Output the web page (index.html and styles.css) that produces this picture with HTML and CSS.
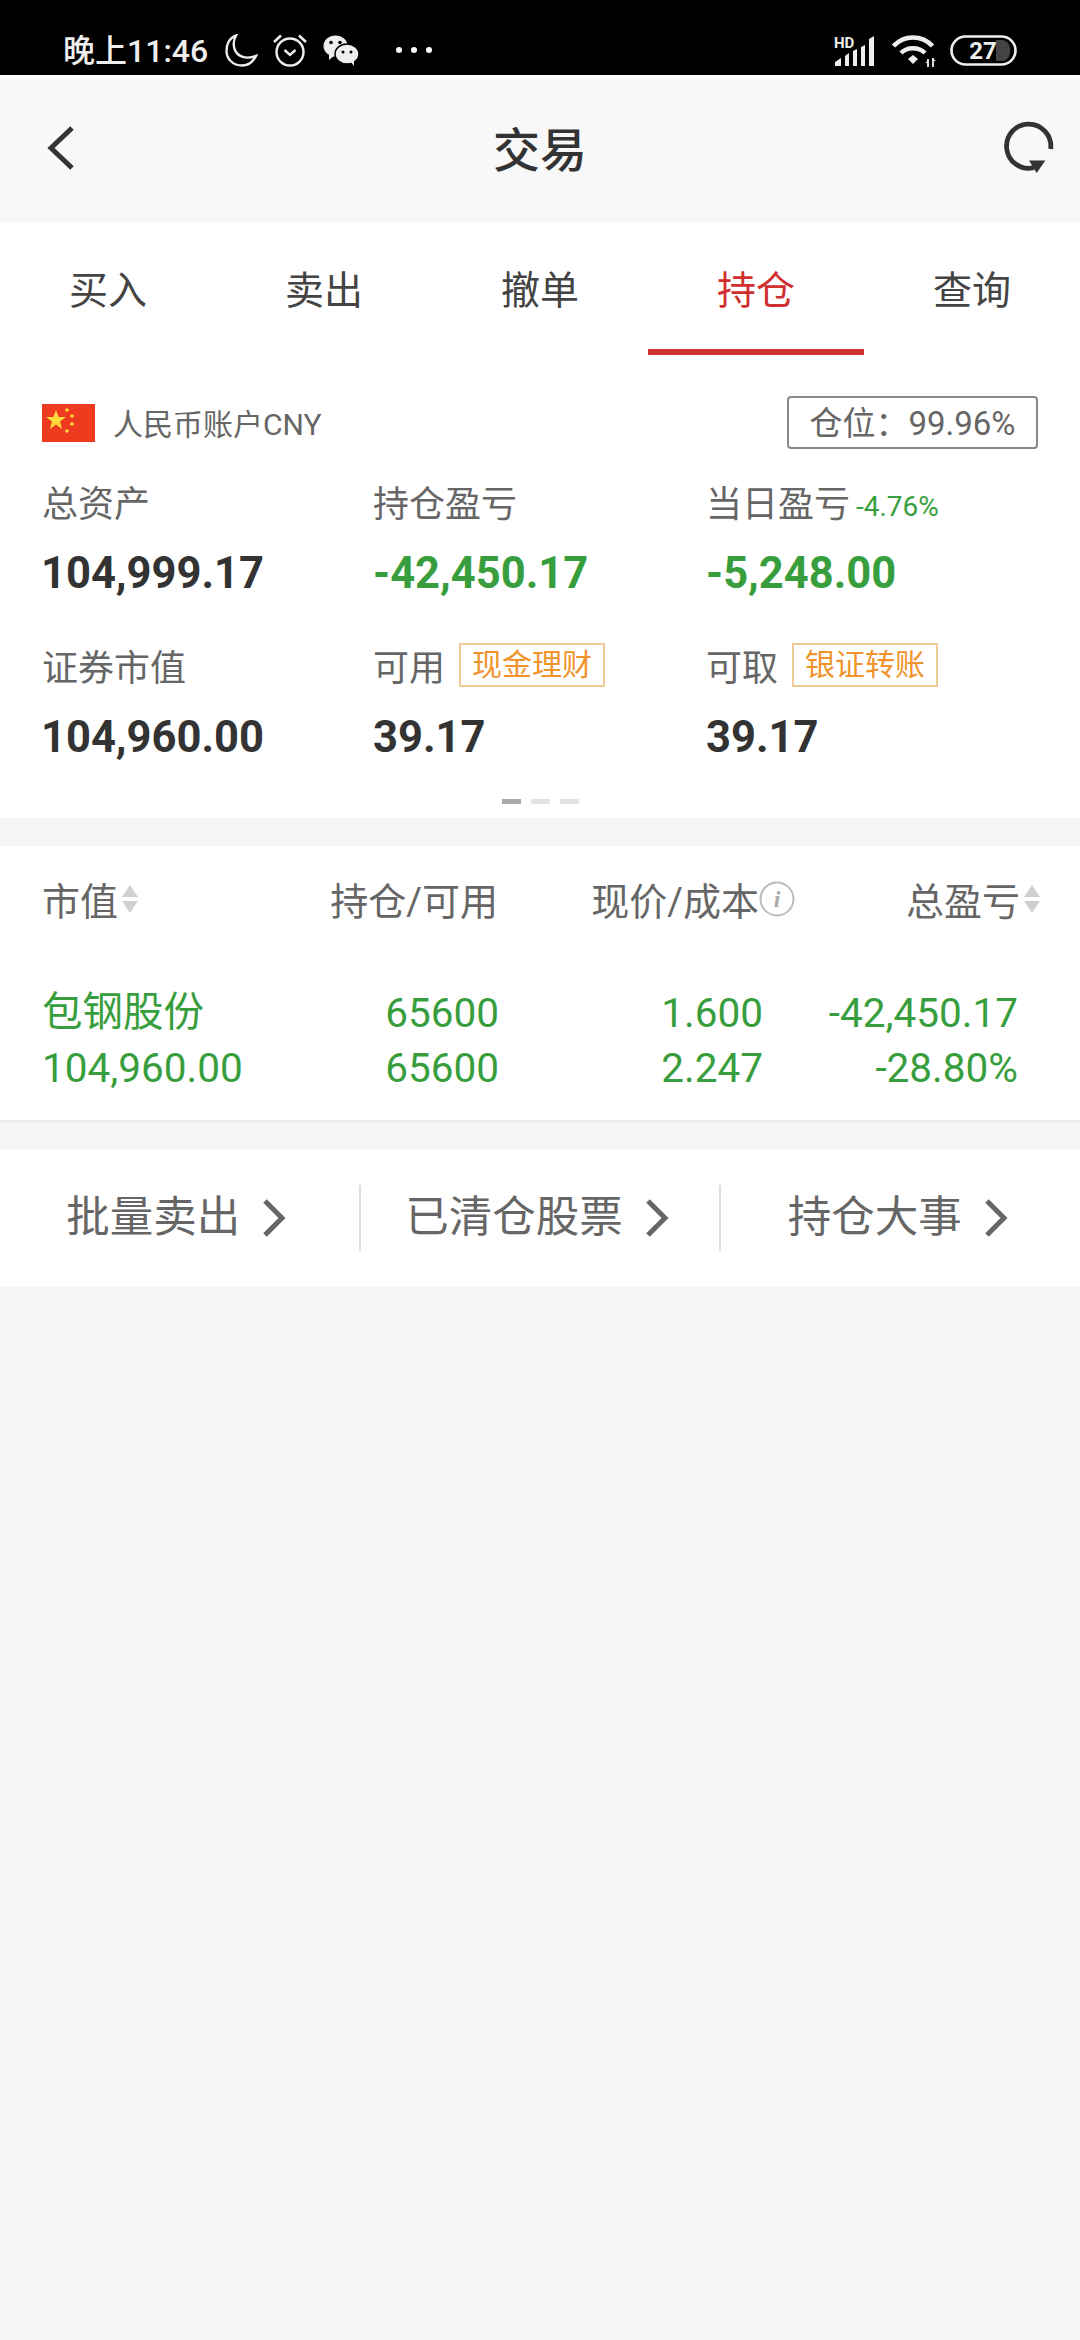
FILE: index.html
```html
<!DOCTYPE html>
<html lang="zh-CN">
<head>
  <meta charset="UTF-8">
  <title>交易</title>
  <link rel="stylesheet" href="styles.css">
</head>
<body>
  <!-- status bar -->
  <div class="status">
    <span class="status-time">晚上11:46</span>
    <svg class="ic-moon" width="33" height="33" viewBox="0 0 33 33"><path d="M11 1.5C4 4 1.5 11 1.5 17C1.5 25 8 31.5 17 31.5C23 31.5 28 28 31 22C20 26 12 22 9.500 15C8 10 9 5 11 1.500Z" fill="none" stroke="#eee" stroke-width="2.400"/></svg>
    <svg class="ic-alarm" width="34" height="35" viewBox="0 0 34 35"><circle cx="17" cy="19" r="13.500" fill="none" stroke="#eee" stroke-width="2.400"/><path d="M1 9L8 2.500M33 9L26 2.500" stroke="#eee" stroke-width="2.600"/><path d="M11.500 17L17 22L22.500 17" fill="none" stroke="#eee" stroke-width="2.400"/></svg>
    <svg class="ic-wechat" width="36" height="31" viewBox="0 0 36 31">
      <ellipse cx="12.500" cy="11" rx="12" ry="10.500" fill="#eee"/>
      <path d="M6 18L6 25L12 20Z" fill="#eee"/>
      <ellipse cx="24" cy="19" rx="12" ry="10" fill="#eee" stroke="#000" stroke-width="1.500"/>
      <path d="M28 27L31 31L31 25Z" fill="#eee"/>
      <circle cx="8" cy="7.500" r="1.800" fill="#000"/><circle cx="17" cy="7.500" r="1.800" fill="#000"/>
      <circle cx="20" cy="17" r="1.500" fill="#000"/><circle cx="28" cy="17" r="1.500" fill="#000"/>
    </svg>
    <div class="status-dots"><i></i><i></i><i></i></div>
    <svg class="ic-signal" width="42" height="32" viewBox="0 0 42 32">
      <text x="0" y="13" class="hd-text">HD</text>
      <path d="M1 31V27L7 23V31ZM11 31V21L15 18V31ZM19 31V16L23 14V31ZM27 31V12L31 10V31ZM35 31V4L40 1V31Z" fill="#eee"/>
    </svg>
    <svg class="ic-wifi" width="44" height="34" viewBox="0 0 44 34">
      <path d="M1.500 12C12 0.500 30 0.500 40.500 12M9 19C15 12.500 27 12.500 33 19" fill="none" stroke="#eee" stroke-width="4.500"/>
      <path d="M16 25L21 21L26 25L21 30Z" fill="#eee"/>
      <path d="M36 25V33M41 24V33" stroke="#eee" stroke-width="1.800"/>
      <path d="M33.500 29H36V26ZM41 27V24L43.500 27Z" fill="#eee"/>
    </svg>
    <svg class="ic-battery" width="67" height="31" viewBox="0 0 67 31">
      <rect x="1.500" y="1.500" width="64" height="28" rx="14" fill="none" stroke="#eee" stroke-width="2.600"/>
      <path d="M46 5H52C63 5 63 26 52 26H46Z" fill="#444"/>
      <text x="33" y="24" class="batt-text">27</text>
    </svg>
  </div>

  <!-- title -->
  <div class="topbar">
    <svg class="topbar-icon" width="30" height="46" viewBox="0 0 30 46"><path d="M26 3L5 23L26 43" fill="none" stroke="#333" stroke-width="5"/></svg>
    <h1 class="topbar-title">交易</h1>
    <svg class="topbar-icon" width="50" height="54" viewBox="0 0 52 54">
      <path d="M48.500 28A23 23 0 1 0 31 47.500" fill="none" stroke="#333" stroke-width="5"/>
      <path d="M26 40H43L34 53Z" fill="#333"/>
    </svg>
  </div>

  <!-- tabs -->
  <div class="tabs">
    <div class="tab">买入</div>
    <div class="tab">卖出</div>
    <div class="tab">撤单</div>
    <div class="tab tab-active">持仓</div>
    <div class="tab">查询</div>
  </div>

  <!-- account summary -->
  <div class="summary">
    <div class="account">
      <svg class="flag" width="53" height="38" viewBox="0 0 53 38">
        <rect width="53" height="38" fill="#ee3a1e"/>
        <polygon points="14,6 16.500,13 24,13 18,17.500 20,25 14,20.500 8,25 10,17.500 4,13 11.500,13" fill="#ffdc3c"/>
        <circle cx="25" cy="6" r="1.800" fill="#ffdc3c"/><circle cx="30" cy="12" r="1.800" fill="#ffdc3c"/>
        <circle cx="30" cy="20" r="1.800" fill="#ffdc3c"/><circle cx="25" cy="27" r="1.800" fill="#ffdc3c"/>
      </svg>
      <span class="account-name">人民币账户CNY</span>
      <span class="position">仓位：99.96%</span>
    </div>

    <div class="stats">
      <div class="stat">
        <div class="stat-label">总资产</div>
        <div class="stat-value">104,999.17</div>
      </div>
      <div class="stat">
        <div class="stat-label">持仓盈亏</div>
        <div class="stat-value green">-42,450.17</div>
      </div>
      <div class="stat">
        <div class="stat-label">当日盈亏 <span class="stat-pct">-4.76%</span></div>
        <div class="stat-value green">-5,248.00</div>
      </div>
      <div class="stat">
        <div class="stat-label">证券市值</div>
        <div class="stat-value">104,960.00</div>
      </div>
      <div class="stat">
        <div class="stat-label">可用 <span class="tag">现金理财</span></div>
        <div class="stat-value">39.17</div>
      </div>
      <div class="stat">
        <div class="stat-label">可取 <span class="tag">银证转账</span></div>
        <div class="stat-value">39.17</div>
      </div>
    </div>

    <div class="pager"><i class="on"></i><i></i><i></i></div>
  </div>

  <!-- holdings -->
  <div class="holdings">
    <div class="holdings-head">
      <div class="th">市值<span class="sort"></span></div>
      <div class="th th-right">持仓/可用</div>
      <div class="th th-right">现价/成本<svg class="ic-info" width="36" height="36" viewBox="0 0 36 36"><circle cx="18" cy="18" r="16.500" fill="none" stroke="#bbb" stroke-width="2"/><text x="18" y="26" class="info-text">i</text></svg></div>
      <div class="th th-right">总盈亏<span class="sort"></span></div>
    </div>
    <div class="holdings-row">
      <div class="name">包钢股份</div>
      <div class="num">65600</div>
      <div class="num">1.600</div>
      <div class="num">-42,450.17</div>
      <div>104,960.00</div>
      <div class="num">65600</div>
      <div class="num">2.247</div>
      <div class="num">-28.80%</div>
    </div>
  </div>

  <!-- links -->
  <div class="links">
    <div class="link">批量卖出<svg width="24" height="38" viewBox="0 0 24 38"><path d="M3 2L20 19L3 36" fill="none" stroke="#666" stroke-width="5"/></svg></div>
    <div class="link">已清仓股票<svg width="24" height="38" viewBox="0 0 24 38"><path d="M3 2L20 19L3 36" fill="none" stroke="#666" stroke-width="5"/></svg></div>
    <div class="link">持仓大事<svg width="24" height="38" viewBox="0 0 24 38"><path d="M3 2L20 19L3 36" fill="none" stroke="#666" stroke-width="5"/></svg></div>
  </div>
</body>
</html>
```

FILE: styles.css
```css
* {
  box-sizing: border-box;
}
body {
  margin: 0;
  height: 2340px;
  overflow: hidden;
  background-color: #f5f5f5;
  font-family: Roboto, "Noto Sans CJK SC", sans-serif;
  color: #666;
}
.green {
  color: #389e3d;
}

/* status bar */
.status {
  display: flex;
  align-items: center;
  height: 75px;
  padding: 26px 63px 0;
  background-color: #000;
  color: #eee;
}
.status-time {
  font-size: 32px;
  font-weight: 500;
  line-height: 40px;
}
.ic-moon {
  margin-left: 17px;
}
.ic-alarm {
  margin-left: 15px;
}
.ic-wechat {
  margin-left: 16px;
}
.status-dots {
  display: flex;
  gap: 9px;
  margin-left: 37px;
  margin-bottom: 2px;
}
.status-dots i {
  width: 6px;
  height: 6px;
  border-radius: 50%;
  background-color: #fff;
}
.ic-signal {
  margin-left: auto;
}
.ic-wifi {
  margin-left: 16px;
}
.ic-battery {
  margin-left: 14px;
}
.hd-text {
  font: 700 15px Roboto, sans-serif;
  fill: #eee;
}
.batt-text {
  font: 700 24px Roboto, sans-serif;
  fill: #eee;
  text-anchor: middle;
}

/* title */
.topbar {
  display: flex;
  align-items: center;
  justify-content: space-between;
  height: 148px;
  padding: 0 26px 6px 46px;
  border-top: 4px solid #fff;
  background-color: #f8f8f8;
}
.topbar-title {
  margin: 0 0 4px;
  font-size: 47px;
  font-weight: 500;
  color: #333;
}

/* tabs */
.tabs {
  display: flex;
  height: 132px;
  background-color: #fff;
}
.tab {
  flex: 1;
  margin: 0;
  line-height: 136px;
  text-align: center;
  font-size: 39px;
  color: #444;
  border-bottom: 6px solid transparent;
}
.tab-active {
  color: #d0302f;
  border-bottom-color: #d0302f;
}

/* account summary */
.summary {
  padding: 41px 42px 14px;
  background-color: #fff;
}
.account {
  display: flex;
  align-items: center;
  height: 53px;
}
.account-name {
  margin-left: 18px;
  margin-bottom: 2px;
  font-size: 30px;
}
.position {
  margin-left: auto;
  width: 251px;
  height: 53px;
  line-height: 51px;
  text-align: center;
  font-size: 33px;
  border: 2px solid #888;
  border-radius: 4px;
}
.stats {
  display: grid;
  grid-template-columns: 331px 333px 1fr;
  row-gap: 45px;
  margin-top: 29px;
}
.stat-label {
  display: flex;
  align-items: center;
  gap: 10px;
  height: 50px;
  padding-bottom: 5px;
  font-size: 36px;
  white-space: nowrap;
}
.stat-pct {
  margin-top: 12px;
  margin-left: -4px;
  font-size: 28px;
  color: #389e3d;
}
.stat-value {
  margin-top: 19px;
  height: 50px;
  line-height: 53px;
  font-size: 43.500px;
  font-weight: 700;
  color: #333;
}
.stat:nth-child(3n+1) .stat-value {
  margin-left: -1px;
}
.stat-value.green {
  color: #389e3d;
}
.tag {
  width: 146px;
  height: 44px;
  margin-left: 4px;
  margin-top: 1px;
  line-height: 40px;
  text-align: center;
  font-size: 30px;
  color: #f0932b;
  border: 2px solid #efcb94;
}
.pager {
  display: flex;
  justify-content: center;
  gap: 10px;
  margin-top: 38px;
}
.pager i {
  width: 19px;
  height: 5px;
  background-color: #e3e3e3;
}
.pager i.on {
  background-color: #aaa;
}

/* holdings */
.holdings {
  margin-top: 28px;
  padding-bottom: 25px;
  background-color: #fff;
  border-bottom: 3px solid #eee;
}
.holdings-head {
  display: grid;
  grid-template-columns: 220px 236px 297px 245px;
  height: 108px;
  padding-left: 42px;
  padding-bottom: 3px;
  align-items: center;
}
.th {
  display: flex;
  align-items: center;
  font-size: 38px;
}
.th-right {
  justify-content: flex-end;
}
.sort {
  display: flex;
  flex-direction: column;
  gap: 4px;
  margin-left: 4px;
}
.sort::before,
.sort::after {
  content: "";
  width: 0;
  height: 0;
  border-left: 8.500px solid transparent;
  border-right: 8.500px solid transparent;
}
.sort::before {
  border-bottom: 12px solid #d0d0d0;
}
.sort::after {
  border-top: 12px solid #d0d0d0;
}
.info-text {
  font: italic 700 24px "Liberation Serif", serif;
  fill: #aaa;
  text-anchor: middle;
}
.holdings-row {
  display: grid;
  grid-template-columns: 220px 237px 264px 255px;
  grid-auto-rows: 55px;
  align-items: center;
  margin-top: 31px;
  padding-left: 42px;
  font-size: 40.500px;
  color: #389e3d;
}
.name {
  margin-bottom: 8px;
}
.num {
  text-align: right;
}

/* links */
.links {
  display: flex;
  align-items: center;
  height: 138px;
  margin-top: 26px;
  background-color: #fff;
}
.link {
  flex: 1;
  display: flex;
  align-items: center;
  justify-content: center;
  gap: 22px;
  height: 66px;
  padding-right: 6px;
  font-size: 43.500px;
  line-height: 66px;
  border-left: 2px solid #ddd;
}
.link:first-child {
  border-left: none;
}
```
